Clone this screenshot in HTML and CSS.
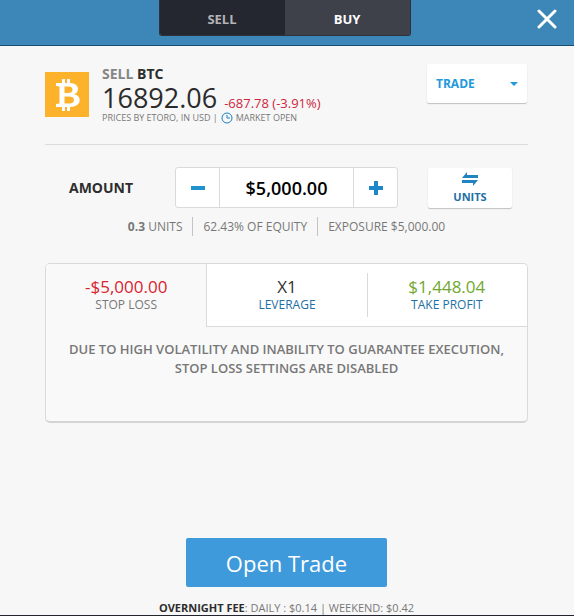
FILE: index.html
```html
<!DOCTYPE html>
<html lang="en">
    <head>
        <meta charset="UTF-8">
        <meta name="viewport" content="width=device-width, initial-scale=1.0">
        <title>Sell BTC</title>
        <link rel="stylesheet" href="styles.css">
    </head>
    <body>
        <header class="topBar">
            <div class="sideSwitch">
                <button type="button" class="sideButton sideActive">SELL</button>
                <button type="button" class="sideButton">BUY</button>
            </div>
            <button type="button" class="closeButton" aria-label="Close">
                <svg width="20" height="20" viewBox="0 0 20 20"><path d="M2 2L18 18M18 2L2 18" stroke="#ffffff" stroke-width="3" stroke-linecap="round"/></svg>
            </button>
        </header>
        <main class="ticket">
            <!-- Instrument and price -->
            <section class="instrument">
                <svg class="coin" width="44" height="45" viewBox="0 0 44 45">
                    <rect width="44" height="45" fill="#fdb22b"/>
                    <path fill="#ffffff" fill-rule="evenodd" d="M11 11H17V7H20V11H22V7H25V11C30 11.300 33 13.500 33 17C33 19.700 31.600 21.500 29 22.300C32.700 23 34.700 25.200 34.700 28.200C34.700 32.300 31 34.600 25 35V39H22V35H20V39H17V35H11V32L14.500 31.500V14.500L11 14ZM19.500 14.500V21H23C26 21 27.500 19.800 27.500 17.700C27.500 15.500 26 14.500 23.500 14.500ZM19.500 24.500V31.500H23.500C27 31.500 29 30.300 29 27.900C29 25.500 27 24.500 23.500 24.500Z"/>
                </svg>
                <div class="quote">
                    <h1 class="quoteTitle"><span class="muted">SELL</span> BTC</h1>
                    <div class="priceLine">
                        <span class="price">16892.06</span>
                        <span class="change">-687.78 (-3.91%)</span>
                    </div>
                    <p class="source">
                        PRICES BY ETORO, IN USD |
                        <svg width="12" height="12" viewBox="0 0 12 12" fill="none" stroke="#1a80c0"><circle cx="6" cy="6" r="5"/><path d="M6 3V6H9"/></svg>
                        MARKET OPEN
                    </p>
                </div>
                <div class="orderType">
                    <select class="orderSelect" aria-label="Order type">
                        <option>TRADE</option>
                        <option>ORDER</option>
                    </select>
                    <svg class="orderArrow" width="8" height="4" viewBox="0 0 8 4"><path d="M0 0H8L4 4Z" fill="#2299dd"/></svg>
                </div>
            </section>
            <!-- Amount -->
            <section class="amountRow">
                <label class="amountLabel" for="amount">AMOUNT</label>
                <div class="stepper">
                    <button type="button" class="stepButton" aria-label="Decrease">
                        <svg width="16" height="16" viewBox="0 0 16 16"><path d="M1 8H15" stroke="#2093ce" stroke-width="4"/></svg>
                    </button>
                    <input type="text" class="amountInput" id="amount" value="$5,000.00">
                    <button type="button" class="stepButton" aria-label="Increase">
                        <svg width="16" height="16" viewBox="0 0 16 16"><path d="M1 8H15M8 1V15" stroke="#1c86c7" stroke-width="4"/></svg>
                    </button>
                </div>
                <button type="button" class="unitsButton">
                    <svg width="18" height="15" viewBox="0 0 18 15" fill="#2183c0"><path d="M1 6L6 0V3H17V6ZM1 8H17L12 14V11H1Z"/></svg>
                    UNITS
                </button>
            </section>
            <ul class="stats">
                <li><b>0.3</b> UNITS</li>
                <li>62.43% OF EQUITY</li>
                <li>EXPOSURE $5,000.00</li>
            </ul>
            <!-- Stop loss, leverage and take profit -->
            <section class="card">
                <div class="tabs">
                    <button type="button" class="tab tabActive"><span class="tabValue red">-$5,000.00</span><span class="tabName">STOP LOSS</span></button>
                    <button type="button" class="tab"><span class="tabValue">X1</span><span class="tabName">LEVERAGE</span></button>
                    <button type="button" class="tab"><span class="tabValue green">$1,448.04</span><span class="tabName">TAKE PROFIT</span></button>
                </div>
                <p class="notice">DUE TO HIGH VOLATILITY AND INABILITY TO GUARANTEE EXECUTION, STOP LOSS SETTINGS ARE DISABLED</p>
            </section>
            <footer class="actions">
                <button type="button" class="openTrade">Open Trade</button>
                <p class="fee"><b>OVERNIGHT FEE</b>: DAILY : $0.14 | WEEKEND: $0.42</p>
            </footer>
        </main>
    </body>
</html>
```
FILE: styles.css
```css
*{
    margin: 0;
    padding: 0;
    box-sizing: border-box;
}
body{
    display: flex;
    flex-direction: column;
    min-height: 100vh;
    background-color: #f7f7f7;
    border-bottom: 1px solid #22252e;
    font-family: "Open Sans", "Noto Sans", sans-serif;
    color: #777777;
}
button, input, select{
    font-family: inherit;
    border: none;
}
button{
    cursor: pointer;
}
svg{
    display: block;
}
.topBar{
    display: grid;
    grid-template-columns: 1fr auto 1fr;
    align-items: start;
    height: 46px;
    padding: 0 17px 0 12px;
    background-color: #3c86b8;
    border-bottom: 1px solid #184d73;
}
.sideSwitch{
    grid-column: 2;
    display: flex;
    border: 1px solid #30323b;
    border-top: none;
    border-radius: 0 0 3px 3px;
    overflow: hidden;
}
.sideButton{
    width: 125px;
    height: 35px;
    padding-top: 3px;
    background-color: #3e404a;
    color: #ffffff;
    font-size: 13px;
    font-weight: bold;
}
.sideActive{
    background-color: #24272f;
    color: #b4b4b6;
}
.closeButton{
    justify-self: end;
    margin-top: 9px;
    background: none;
}
.ticket{
    flex: 1;
    display: flex;
    flex-direction: column;
    padding: 18px 46px 0 45px;
}
.instrument{
    display: flex;
    align-items: flex-start;
    height: 81px;
    border-bottom: 1px solid #dcdcdc;
}
.coin{
    margin-top: 8px;
}
.quote{
    flex: 1;
    padding-left: 13px;
}
.quoteTitle{
    color: #2d2d2d;
    font-size: 14px;
    line-height: 20px;
}
.muted{
    color: #858585;
}
.priceLine{
    display: flex;
    align-items: baseline;
    gap: 7px;
    line-height: 27px;
}
.price{
    color: #2b2b2b;
    font-size: 27px;
}
.change{
    color: #d0243c;
    font-size: 13px;
    line-height: 14px;
}
.source{
    display: flex;
    align-items: center;
    gap: 3px;
    font-size: 9px;
    line-height: 14px;
}
.orderType{
    display: grid;
    align-items: center;
    width: 100px;
    margin-right: 1px;
    background-color: #ffffff;
    border-radius: 2px;
    box-shadow: 0 1px 1px #c0c0c0;
}
.orderSelect{
    grid-area: 1 / 1;
    height: 39px;
    padding: 0 9px;
    appearance: none;
    background: none;
    color: #2299dd;
    font-size: 12px;
    font-weight: bold;
}
.orderArrow{
    grid-area: 1 / 1;
    justify-self: end;
    margin-right: 9px;
    pointer-events: none;
}
.amountRow{
    display: flex;
    align-items: center;
    justify-content: space-between;
    padding: 22px 16px 0 24px;
}
.amountLabel{
    width: 106px;
    color: #2d2d2d;
    font-size: 14px;
    font-weight: bold;
}
.stepper{
    display: flex;
    width: 223px;
    margin-right: 30px;
    background-color: #ffffff;
    border: 1px solid #dadada;
    border-radius: 3px;
}
.stepButton{
    display: flex;
    align-items: center;
    justify-content: center;
    width: 43px;
    background: none;
}
.amountInput{
    flex: 1;
    min-width: 0;
    height: 39px;
    border: solid #dadada;
    border-width: 0 1px;
    background: none;
    color: #000000;
    font-size: 18px;
    font-weight: 600;
    text-align: center;
}
.unitsButton{
    display: flex;
    flex-direction: column;
    align-items: center;
    gap: 2px;
    width: 84px;
    height: 40px;
    padding-top: 4px;
    background-color: #ffffff;
    border-radius: 2px;
    box-shadow: 0 1px 1px #c0c0c0;
    color: #1d6fa5;
    font-size: 11px;
    font-weight: bold;
    line-height: 16px;
}
.stats{
    display: flex;
    justify-content: center;
    padding-top: 9px;
    list-style: none;
    font-size: 12px;
    line-height: 19px;
}
.stats li{
    padding: 0 10px;
}
.stats li + li{
    border-left: 1px solid #c4c4c4;
}
.card{
    min-height: 160px;
    margin-top: 27px;
    background-color: #f9f9f9;
    border: 1px solid #dadada;
    border-bottom: 2px solid #d4d4d4;
    border-radius: 5px;
    overflow: hidden;
}
.tabs{
    display: grid;
    grid-template-columns: 1fr 1fr 1fr;
    background-color: #ffffff;
}
.tab{
    height: 63px;
    border-bottom: 1px solid #dadada;
    background: linear-gradient(#dadada, #dadada) left center / 1px 44px no-repeat;
    color: #1d6fa5;
}
.tabActive{
    background: #f9f9f9;
    border-bottom-color: #f9f9f9;
    color: #777777;
}
.tabActive + .tab{
    background: none;
    border-left: 1px solid #dadada;
}
.tabValue{
    display: block;
    color: #333333;
    font-size: 17px;
    line-height: 20px;
}
.tabName{
    display: block;
    font-size: 12px;
    line-height: 16px;
}
.red{
    color: #d92330;
}
.green{
    color: #71a82f;
}
.notice{
    padding: 13px 20px;
    font-size: 13px;
    font-weight: 600;
    line-height: 19px;
    text-align: center;
}
.actions{
    display: flex;
    flex-direction: column;
    align-items: center;
    margin-top: auto;
}
.openTrade{
    width: 201px;
    height: 49px;
    background-color: #3f9adb;
    border-radius: 2px;
    color: #ffffff;
    font-size: 22px;
}
.fee{
    padding-top: 14px;
    font-size: 11px;
    line-height: 14px;
}
.fee b{
    color: #2d2d2d;
}
```
